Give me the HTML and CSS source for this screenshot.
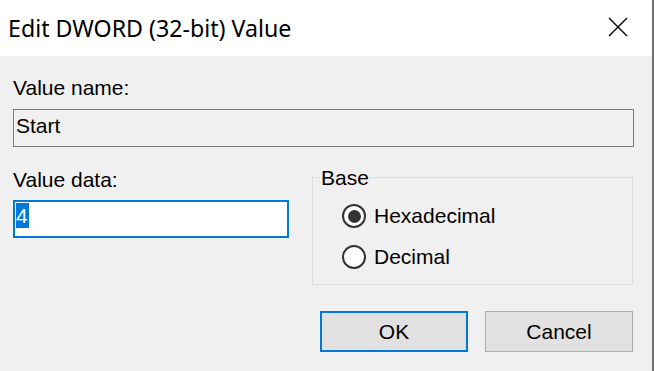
FILE: index.html
```html
<!DOCTYPE html>
<html>
<head>
  <title>Edit DWORD (32-bit) Value</title>
  <link rel="stylesheet" href="styles.css">
</head>
<body>
  <div class="window">
    <div class="titlebar">
      <span class="title">Edit DWORD (32-bit) Value</span>
      <svg class="close" width="20" height="20" viewBox="0 0 20 20">
        <path d="M1 1 L19 19 M19 1 L1 19" stroke="#000" stroke-width="1.4" fill="none"/>
      </svg>
    </div>

    <div class="content">
      <div class="label">Value name:</div>
      <div class="name-box">Start</div>

      <div class="data-row">
        <div class="data-col">
          <div class="label">Value data:</div>
          <div class="data-input"><span class="selection">4</span></div>
        </div>

        <div class="base-group">
          <div class="group-title">Base</div>
          <div class="radio first">
            <span class="radio-circle"><span class="radio-dot"></span></span>
            <span>Hexadecimal</span>
          </div>
          <div class="radio">
            <span class="radio-circle"></span>
            <span>Decimal</span>
          </div>
        </div>
      </div>

      <div class="buttons">
        <button class="btn btn-default">OK</button>
        <button class="btn">Cancel</button>
      </div>
    </div>
  </div>
</body>
</html>
```

FILE: styles.css
```css
body {
  margin: 0;
  background-color: #f0f0f0;
  font-family: "Liberation Sans", Arial, sans-serif;
  font-size: 21px;
  color: #000;
}

.window {
  width: 654px;
  height: 371px;
  box-sizing: border-box;
  border-right: 2px solid #707070;
  background-color: #f0f0f0;
}

.titlebar {
  height: 56px;
  background-color: #fff;
  display: flex;
  align-items: center;
  justify-content: space-between;
  padding: 0 24px 0 8px;
}

.title {
  font-family: "Segoe UI", "Noto Sans", sans-serif;
  font-size: 23.2px;
  line-height: 30px;
  padding-bottom: 1px;
}

.close {
  display: block;
  margin-bottom: 2px;
}

.content {
  padding: 20px 18px 0 13px;
}

.label {
  line-height: 24px;
}

.name-box {
  margin-top: 9px;
  height: 38px;
  box-sizing: border-box;
  border: 1px solid #7a7a7a;
  padding: 4px 2px;
  line-height: 24px;
}

.data-row {
  display: flex;
  align-items: flex-start;
  gap: 23px;
  margin-top: 21px;
}

.data-col {
  width: 276px;
}

.data-input {
  margin-top: 8px;
  height: 38px;
  box-sizing: border-box;
  border: 2px solid #0078d7;
  background-color: #fff;
  padding: 1px;
}

.selection {
  display: inline-block;
  background-color: #0078d7;
  color: #fff;
  line-height: 25px;
  padding-right: 1px;
  vertical-align: top;
}

.base-group {
  flex: 1;
  margin: 9px 1px 0 0;
  border: 1px solid #dcdcdc;
  padding: 0 0 15px 29px;
}

.group-title {
  width: fit-content;
  line-height: 24px;
  margin: -12px 0 0 -22px;
  padding: 0 1px;
  background-color: #f0f0f0;
}

.radio {
  display: flex;
  align-items: center;
  gap: 8px;
  height: 24px;
  margin-top: 17px;
}

.radio.first {
  margin-top: 14px;
}

.radio-circle {
  width: 24px;
  height: 24px;
  box-sizing: border-box;
  border: 2px solid #333;
  border-radius: 50%;
  background-color: #fff;
  display: flex;
  align-items: center;
  justify-content: center;
}

.radio-dot {
  width: 13px;
  height: 13px;
  border-radius: 50%;
  background-color: #333;
}

.buttons {
  display: flex;
  justify-content: flex-end;
  gap: 17px;
  margin: 26px 1px 0 0;
}

.btn {
  width: 148px;
  height: 41px;
  box-sizing: border-box;
  background-color: #e1e1e1;
  border: 1px solid #adadad;
  font-family: "Liberation Sans", Arial, sans-serif;
  font-size: 21px;
  color: #000;
  padding: 0;
}

.btn-default {
  border: 2px solid #0078d7;
}
```
